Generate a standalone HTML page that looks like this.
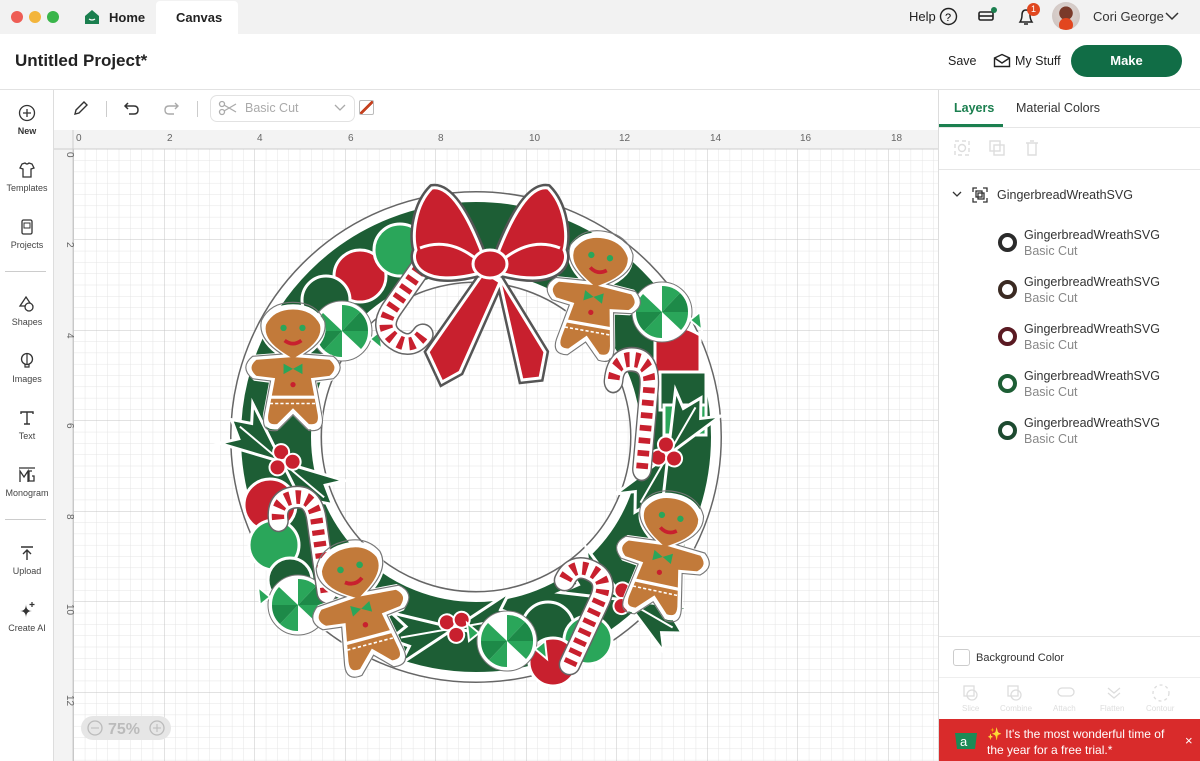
<!DOCTYPE html>
<html><head><meta charset="utf-8"><style>
*{margin:0;padding:0;box-sizing:border-box}
body{width:1200px;height:761px;overflow:hidden;background:#fff;font-family:"Liberation Sans",sans-serif;color:#222;position:relative}
.abs{position:absolute}
.top{left:0;top:0;width:1200px;height:34px;background:#f2f2f2}
.dot{width:12px;height:12px;border-radius:50%;top:11px}
.hdr{top:34px;left:0;width:1200px;height:56px;background:#fff;border-bottom:1px solid #e2e2e2}
.side{left:0;top:90px;width:54px;height:671px;background:#fff;border-right:1px solid #ddd}
.si{width:54px;text-align:center;font-size:9px;color:#444}
.si svg{display:block;margin:0 auto 4px}
.tb{left:54px;top:90px;width:884px;height:40px;background:#fff}
.rp{left:938px;top:90px;width:262px;height:671px;background:#fff;border-left:1px solid #ddd}
.lay{left:1024px;font-size:12.5px;color:#333;line-height:16px}
.lay span{color:#888}
.th{left:998px;width:19px;height:19px;border-radius:50%;border:4px solid #2b2b2b;background:#fff}
</style></head><body>
<div class="abs top"></div>
<div class="abs dot" style="left:11px;background:#ee5d55"></div>
<div class="abs dot" style="left:29px;background:#f3b53c"></div>
<div class="abs dot" style="left:47px;background:#39b54a"></div>
<svg class="abs" style="left:84px;top:9px" width="16" height="16" viewBox="0 0 16 16"><path d="M1 7 L8 1 L15 7 V15 H1Z" fill="#1b7f4f"/><path d="M5 10 Q8 12 11 10" stroke="#fff" stroke-width="1.3" fill="none"/></svg>
<div class="abs" style="left:109px;top:10px;font-size:13px;font-weight:bold;color:#222">Home</div>
<div class="abs" style="left:156px;top:1px;width:82px;height:33px;background:#fff;border-radius:4px 4px 0 0"></div>
<div class="abs" style="left:176px;top:10px;font-size:13px;font-weight:bold;color:#222">Canvas</div>
<div class="abs" style="left:909px;top:9px;font-size:13px">Help</div>
<svg class="abs" style="left:939px;top:7px" width="19" height="19"><circle cx="9.5" cy="9.5" r="8" stroke="#222" stroke-width="1.4" fill="none"/><text x="6" y="14" font-size="11" font-family="Liberation Sans">?</text></svg>
<svg class="abs" style="left:977px;top:7px" width="20" height="16"><rect x="2" y="5" width="14" height="8" rx="1.5" fill="none" stroke="#222" stroke-width="1.6"/><line x1="2" y1="9" x2="16" y2="9" stroke="#222" stroke-width="1.6"/><circle cx="17" cy="3" r="3" fill="#1b7f4f"/></svg>
<svg class="abs" style="left:1016px;top:7px" width="20" height="20"><path d="M4 15 Q6 12 6 8 Q6 3 10 3 Q14 3 14 8 Q14 12 16 15Z M8 17 H12" fill="none" stroke="#222" stroke-width="1.5"/></svg>
<div class="abs" style="left:1027px;top:3px;width:13px;height:13px;border-radius:50%;background:#e0471f;color:#fff;font-size:9px;text-align:center;line-height:13px">1</div>
<div class="abs" style="left:1052px;top:2px;width:28px;height:28px;border-radius:50%;background:radial-gradient(circle at 50% 40%,#7a3a2a 30%,#d9cfcb 32%,#c9c0bd);overflow:hidden"><div style="position:absolute;left:7px;top:16px;width:14px;height:14px;border-radius:50%;background:#e2461f"></div></div>
<div class="abs" style="left:1093px;top:9px;font-size:13px;color:#333">Cori George</div>
<svg class="abs" style="left:1165px;top:11px" width="14" height="10"><path d="M1 2 L7 8 L13 2" stroke="#333" stroke-width="1.5" fill="none"/></svg>

<div class="abs hdr"></div>
<div class="abs" style="left:15px;top:51px;font-size:17px;font-weight:bold;color:#222">Untitled Project*</div>
<div class="abs" style="left:948px;top:54px;font-size:12.5px">Save</div>
<svg class="abs" style="left:993px;top:53px" width="18" height="15"><path d="M1.5 5 L9 1.5 L16.5 5 V13.5 H1.5Z M1.5 5 L9 10 L16.5 5" fill="none" stroke="#222" stroke-width="1.4"/></svg>
<div class="abs" style="left:1015px;top:54px;font-size:12.5px">My Stuff</div>
<div class="abs" style="left:1071px;top:45px;width:111px;height:32px;border-radius:16px;background:#116d46;color:#fff;font-weight:bold;font-size:13px;text-align:center;line-height:32px">Make</div>

<div class="abs side"></div>
<div class="abs si" style="top:104px"><svg width="18" height="18"><circle cx="9" cy="9" r="7.5" fill="none" stroke="#333" stroke-width="1.3"/><path d="M9 5V13M5 9H13" stroke="#333" stroke-width="1.3"/></svg><b style="color:#333">New</b></div>
<div class="abs si" style="top:161px"><svg width="18" height="18"><path d="M4 3 L7 2 Q9 4 11 2 L14 3 L16 7 L13 8 V16 H5 V8 L2 7Z" fill="none" stroke="#333" stroke-width="1.3"/></svg>Templates</div>
<div class="abs si" style="top:218px"><svg width="18" height="18"><rect x="4" y="2" width="10" height="14" rx="1.5" fill="none" stroke="#333" stroke-width="1.3"/><rect x="6" y="5" width="6" height="5" fill="none" stroke="#333"/></svg>Projects</div>
<div class="abs" style="left:5px;top:271px;width:41px;height:1px;background:#ccc"></div>
<div class="abs si" style="top:295px"><svg width="18" height="18"><path d="M8 2 L14 11 H2Z" fill="none" stroke="#333" stroke-width="1.3"/><circle cx="11" cy="12" r="4" fill="#fff" stroke="#333" stroke-width="1.3"/></svg>Shapes</div>
<div class="abs si" style="top:352px"><svg width="18" height="18"><circle cx="9" cy="7" r="5.5" fill="none" stroke="#333" stroke-width="1.3"/><path d="M7 12 V15 H11 V12 M9 2 V12" fill="none" stroke="#333" stroke-width="1.2"/></svg>Images</div>
<div class="abs si" style="top:409px"><svg width="18" height="18"><path d="M3 5 V3 H15 V5 M9 3 V15 M6 15 H12" fill="none" stroke="#333" stroke-width="1.4"/></svg>Text</div>
<div class="abs si" style="top:466px"><svg width="20" height="18"><path d="M2 2 H18 M3 16 V5 L7 11 L11 5 V16 M15 5 H12 V15 H17 V10 H15" fill="none" stroke="#333" stroke-width="1.3"/></svg>Monogram</div>
<div class="abs" style="left:5px;top:519px;width:41px;height:1px;background:#ccc"></div>
<div class="abs si" style="top:544px"><svg width="18" height="18"><path d="M3 3 H15 M9 16 V6 M5 10 L9 6 L13 10" fill="none" stroke="#333" stroke-width="1.4"/></svg>Upload</div>
<div class="abs si" style="top:601px"><svg width="18" height="18"><path d="M8 3 Q8 10 2 10 Q8 10 8 17 Q8 10 14 10 Q8 10 8 3Z" fill="#333"/><path d="M14 1 V6 M11.5 3.5 H16.5" stroke="#333" stroke-width="1.2"/></svg>Create AI</div>

<div class="abs tb"></div>
<svg class="abs" style="left:72px;top:99px" width="18" height="18"><path d="M3 15 L4 11 L12 3 L15 6 L7 14Z" fill="none" stroke="#333" stroke-width="1.4"/></svg>
<div class="abs" style="left:106px;top:101px;width:1px;height:16px;background:#ccc"></div>
<svg class="abs" style="left:123px;top:100px" width="18" height="16"><path d="M5 3 L2 6 L5 9 M2 6 H11 Q15 6 15 10 Q15 14 11 14 H6" fill="none" stroke="#333" stroke-width="1.5"/></svg>
<svg class="abs" style="left:162px;top:100px" width="18" height="16"><path d="M13 3 L16 6 L13 9 M16 6 H7 Q3 6 3 10 Q3 14 7 14 H12" fill="none" stroke="#aaa" stroke-width="1.4"/></svg>
<div class="abs" style="left:197px;top:101px;width:1px;height:16px;background:#ccc"></div>
<div class="abs" style="left:210px;top:95px;width:145px;height:27px;border:1px solid #e2e2e2;border-radius:7px"></div>
<svg class="abs" style="left:218px;top:100px" width="20" height="16"><circle cx="4" cy="4" r="2.5" fill="none" stroke="#aaa" stroke-width="1.3"/><circle cx="4" cy="12" r="2.5" fill="none" stroke="#aaa" stroke-width="1.3"/><path d="M6 5 L18 12 M6 11 L18 4" stroke="#aaa" stroke-width="1.3"/></svg>
<div class="abs" style="left:245px;top:101px;font-size:12.5px;color:#aaa">Basic Cut</div>
<svg class="abs" style="left:334px;top:104px" width="12" height="8"><path d="M1 1 L6 6 L11 1" fill="none" stroke="#aaa" stroke-width="1.3"/></svg>
<div class="abs" style="left:359px;top:100px;width:15px;height:15px;border:1px solid #bbb;border-radius:2px;background:linear-gradient(135deg,transparent 44%,#c5411f 44%,#c5411f 58%,transparent 58%)"></div>

<svg class="abs" style="left:54px;top:130px" width="884" height="631">
<defs>
<pattern id="mn" x="19.5" y="19" width="11.3125" height="11.3125" patternUnits="userSpaceOnUse"><path d="M0 0 V11.3125 M0 0 H11.3125" stroke="#e4e4e4" stroke-width="1"/></pattern>
<pattern id="mj" x="19.5" y="19" width="90.5" height="90.5" patternUnits="userSpaceOnUse"><path d="M0 0 V90.5 M0 0 H90.5" stroke="#c4c4c4" stroke-width="1"/></pattern>
</defs>
<rect width="884" height="631" fill="#fff"/>
<rect x="19" y="19" width="865" height="612" fill="url(#mn)"/>
<rect x="19" y="19" width="865" height="612" fill="url(#mj)"/>
<rect width="884" height="19" fill="#f3f3f3"/><rect width="19" height="631" fill="#f3f3f3"/>
<line x1="0" y1="19" x2="884" y2="19" stroke="#ccc"/><line x1="19" y1="0" x2="19" y2="631" stroke="#ccc"/>
<g font-size="10" fill="#666" font-family="Liberation Sans">
<text x="22" y="11">0</text><text x="113" y="11">2</text><text x="203" y="11">4</text><text x="294" y="11">6</text><text x="384" y="11">8</text><text x="475" y="11">10</text><text x="565" y="11">12</text><text x="656" y="11">14</text><text x="746" y="11">16</text><text x="837" y="11">18</text>
<text transform="translate(13,22) rotate(90)">0</text><text transform="translate(13,112) rotate(90)">2</text><text transform="translate(13,203) rotate(90)">4</text><text transform="translate(13,293) rotate(90)">6</text><text transform="translate(13,384) rotate(90)">8</text><text transform="translate(13,474) rotate(90)">10</text><text transform="translate(13,565) rotate(90)">12</text>
</g>
<rect x="27" y="586" width="90" height="24" rx="12" fill="#e6e6e6"/>
<circle cx="41" cy="598" r="7" fill="none" stroke="#bbb" stroke-width="1.3"/><path d="M37 598H45" stroke="#bbb"/>
<text x="54" y="604" font-size="16" fill="#bbb" font-weight="bold" font-family="Liberation Sans">75%</text>
<circle cx="103" cy="598" r="7" fill="none" stroke="#bbb" stroke-width="1.3"/><path d="M99 598H107M103 594V602" stroke="#bbb"/>
</svg>

<!-- wreath -->
<svg class="abs" style="left:0;top:0" width="938" height="761">
<defs>
<g id="gb"><path d="M-10 -16 Q-32 -30 -28 -46 Q-20 -62 0 -62 Q20 -62 28 -46 Q32 -30 10 -16 L36 -14 Q48 -4 36 6 L20 8 L26 40 Q28 54 14 52 L0 38 L-14 52 Q-28 54 -26 40 L-20 8 L-36 6 Q-48 -4 -36 -14Z" fill="#c27a3a" stroke="#fff" stroke-width="5"/><path d="M-10 -16 Q-32 -30 -28 -46 Q-20 -62 0 -62 Q20 -62 28 -46 Q32 -30 10 -16 L36 -14 Q48 -4 36 6 L20 8 L26 40 Q28 54 14 52 L0 38 L-14 52 Q-28 54 -26 40 L-20 8 L-36 6 Q-48 -4 -36 -14Z" fill="none" stroke="#777" stroke-width="1" transform="scale(1.07)"/><circle cx="-9" cy="-42" r="3" fill="#2aa65a"/><circle cx="9" cy="-42" r="3" fill="#2aa65a"/><path d="M-8 -30 Q0 -24 8 -30" stroke="#c8202e" stroke-width="3.5" fill="none"/><path d="M-9 -8 L9 2 V-8 L-9 2Z" fill="#2aa65a"/><circle cx="0" cy="12" r="2.5" fill="#c8202e"/><path d="M-22 24 H22" stroke="#fff" stroke-width="3"/><path d="M-22 30 H22" stroke="#fff" stroke-width="1.5" stroke-dasharray="3 2"/></g>
<g id="pm"><circle r="30" fill="#fff" stroke="#777" stroke-width="1"/><g fill="#2aa65a"><path d="M0 0 L0 -26 A26 26 0 0 1 18 -19Z"/><path d="M0 0 L26 0 A26 26 0 0 1 19 18Z"/><path d="M0 0 L0 26 A26 26 0 0 1 -18 19Z"/><path d="M0 0 L-26 0 A26 26 0 0 1 -19 -18Z"/></g><g fill="#1d8a48"><path d="M0 0 L18 -19 A26 26 0 0 1 26 0Z"/><path d="M0 0 L-18 19 A26 26 0 0 1 -26 0Z"/></g><path d="M-28 -8 L-40 -18 L-38 0Z M28 8 L40 18 L38 0Z" fill="#2aa65a" stroke="#fff" stroke-width="2"/></g>
<g id="hl"><path d="M0 0 L-60 -26 L-48 -10 L-66 0 L-48 10 L-60 26Z M0 0 L60 -26 L48 -10 L66 0 L48 10 L60 26Z" fill="#1d5e35" stroke="#fff" stroke-width="3"/><path d="M-55 0 H55" stroke="#fff" stroke-width="2"/><circle cx="-7" cy="-7" r="8" fill="#c8202e" stroke="#fff" stroke-width="2"/><circle cx="8" cy="-7" r="8" fill="#c8202e" stroke="#fff" stroke-width="2"/><circle cx="0" cy="7" r="8" fill="#c8202e" stroke="#fff" stroke-width="2"/></g>
<g id="cc"><path d="M0 60 V-10 Q0 -34 -20 -34 Q-40 -34 -40 -14" fill="none" stroke="#666" stroke-width="22" stroke-linecap="round"/><path d="M0 60 V-10 Q0 -34 -20 -34 Q-40 -34 -40 -14" fill="none" stroke="#fff" stroke-width="19" stroke-linecap="round"/><path d="M0 60 V-10 Q0 -34 -20 -34 Q-40 -34 -40 -14" fill="none" stroke="#c8202e" stroke-width="13" stroke-dasharray="5 6"/></g>
</defs>
<circle cx="476" cy="437" r="200" fill="none" stroke="#666" stroke-width="92"/>
<circle cx="476" cy="437" r="200" fill="none" stroke="#fff" stroke-width="89"/>
<circle cx="476" cy="437" r="200" fill="none" stroke="#1d5e35" stroke-width="70"/>
<!-- gumdrops -->
<g stroke="#fff" stroke-width="3">
<circle cx="360" cy="276" r="26" fill="#c8202e"/><circle cx="400" cy="250" r="26" fill="#2aa65a"/><circle cx="326" cy="300" r="24" fill="#1d5e35"/>
<path d="M655 330 Q675 320 700 335 L700 375 L655 375Z" fill="#c8202e"/><rect x="660" y="372" width="46" height="38" fill="#1d5e35"/><rect x="664" y="405" width="42" height="30" fill="#2aa65a"/>
<circle cx="270" cy="505" r="26" fill="#c8202e"/><circle cx="274" cy="545" r="25" fill="#2aa65a"/><circle cx="290" cy="580" r="22" fill="#1d5e35"/>
<circle cx="548" cy="628" r="26" fill="#1d5e35"/><circle cx="588" cy="640" r="24" fill="#2aa65a"/><circle cx="553" cy="662" r="24" fill="#c8202e"/>
</g>
<use href="#hl" transform="translate(282,462) rotate(40)"/>
<use href="#hl" transform="translate(668,455) rotate(-60)"/>
<use href="#hl" transform="translate(455,628) rotate(-10)"/>
<use href="#hl" transform="translate(625,600) rotate(30)"/>
<use href="#pm" transform="translate(342,331)"/>
<use href="#pm" transform="translate(662,312)"/>
<use href="#pm" transform="translate(298,605)"/>
<use href="#pm" transform="translate(507,641)"/>
<use href="#cc" transform="translate(398,300) rotate(-145)"/>
<use href="#cc" transform="translate(648,400) rotate(5) scale(0.9,1.15)"/>
<use href="#cc" transform="translate(318,530) rotate(-8) scale(0.95,1.05)"/>
<use href="#cc" transform="translate(595,610) rotate(25)"/>
<use href="#gb" transform="translate(293,372) scale(1.05)"/>
<use href="#gb" transform="translate(593,300) rotate(10) scale(1.05)"/>
<use href="#gb" transform="translate(362,612) rotate(-15) scale(1.1)"/>
<use href="#gb" transform="translate(662,560) rotate(12) scale(1.05)"/>
<!-- bow -->
<g stroke="#fff" stroke-width="3" fill="#c8202e">
<path d="M484 272 L428 352 L442 382 L460 372 L500 282Z M496 272 L500 282 L522 380 L540 378 L545 352Z" stroke="#555" stroke-width="8"/>
<path d="M484 272 L428 352 L442 382 L460 372 L500 282Z M496 272 L500 282 L522 380 L540 378 L545 352Z"/>
<path d="M484 258 C468 215 450 185 432 188 C415 205 412 235 416 250 C410 262 420 290 484 272Z" stroke="#555" stroke-width="8"/>
<path d="M496 258 C512 215 530 185 548 188 C565 205 568 235 564 250 C570 262 560 290 496 272Z" stroke="#555" stroke-width="8"/>
<path d="M484 258 C468 215 450 185 432 188 C415 205 412 235 416 250 C410 262 420 290 484 272Z"/>
<path d="M496 258 C512 215 530 185 548 188 C565 205 568 235 564 250 C570 262 560 290 496 272Z"/>
<path d="M420 248 Q450 236 480 262 M560 248 Q530 236 500 262" fill="none"/>
<ellipse cx="490" cy="264" rx="17" ry="14"/>
</g>
</svg>

<div class="abs rp"></div>
<div class="abs" style="left:954px;top:101px;font-size:12.5px;font-weight:bold;color:#1b7f4f">Layers</div>
<div class="abs" style="left:939px;top:124px;width:64px;height:3px;background:#1b7f4f"></div>
<div class="abs" style="left:1016px;top:101px;font-size:12.5px;color:#333">Material Colors</div>
<div class="abs" style="left:939px;top:127px;width:261px;height:1px;background:#e6e6e6"></div>
<svg class="abs" style="left:953px;top:139px" width="90" height="18"><g fill="none" stroke="#ddd" stroke-width="1.4"><rect x="2" y="2" width="14" height="14" stroke-dasharray="4 3"/><circle cx="9" cy="9" r="3.5"/><rect x="37" y="2" width="10" height="10"/><rect x="41" y="6" width="10" height="10"/><path d="M73 4H85M75 4V16H83V4M77 2H81"/></g></svg>
<div class="abs" style="left:939px;top:169px;width:261px;height:1px;background:#e6e6e6"></div>
<svg class="abs" style="left:952px;top:191px" width="10" height="8"><path d="M1 1L5 5L9 1" fill="none" stroke="#333" stroke-width="1.3"/></svg>
<svg class="abs" style="left:972px;top:187px" width="16" height="16"><g fill="none" stroke="#333" stroke-width="1.3"><path d="M1 5V1H5M11 1H15V5M15 11V15H11M5 15H1V11"/><rect x="4" y="4" width="6" height="6"/><rect x="6" y="6" width="6" height="6"/></g></svg>
<div class="abs" style="left:997px;top:188px;font-size:12.5px;color:#333">GingerbreadWreathSVG</div>
<div class="abs th" style="top:233px"></div>
<div class="abs th" style="top:280px;border-color:#3a2a22"></div>
<div class="abs th" style="top:327px;border-color:#5a1a22"></div>
<div class="abs th" style="top:374px;border-color:#1d5e35"></div>
<div class="abs th" style="top:421px;border-color:#1d4a30"></div>
<div class="abs lay" style="top:227px">GingerbreadWreathSVG<br><span>Basic Cut</span></div>
<div class="abs lay" style="top:274px">GingerbreadWreathSVG<br><span>Basic Cut</span></div>
<div class="abs lay" style="top:321px">GingerbreadWreathSVG<br><span>Basic Cut</span></div>
<div class="abs lay" style="top:368px">GingerbreadWreathSVG<br><span>Basic Cut</span></div>
<div class="abs lay" style="top:415px">GingerbreadWreathSVG<br><span>Basic Cut</span></div>
<div class="abs" style="left:939px;top:636px;width:261px;height:1px;background:#e6e6e6"></div>
<div class="abs" style="left:953px;top:649px;width:17px;height:17px;border:1px solid #ccc;border-radius:3px"></div>
<div class="abs" style="left:976px;top:652px;font-size:11px;color:#333">Background Color</div>
<div class="abs" style="left:939px;top:677px;width:261px;height:1px;background:#eee"></div>
<div class="abs" style="left:950px;top:684px;width:240px;font-size:8px;color:#ddd">
<svg width="240" height="18"><g fill="none" stroke="#ddd" stroke-width="1.3"><rect x="14" y="2" width="10" height="10"/><circle cx="22" cy="11" r="5"/><rect x="58" y="2" width="10" height="10"/><circle cx="66" cy="11" r="5"/><rect x="108" y="4" width="16" height="8" rx="4"/><path d="M158 4L164 9L170 4M158 9L164 14L170 9"/><circle cx="211" cy="9" r="8" stroke-dasharray="3 3"/></g></svg>
<div style="position:relative;height:10px"><span style="position:absolute;left:12px">Slice</span><span style="position:absolute;left:50px">Combine</span><span style="position:absolute;left:103px">Attach</span><span style="position:absolute;left:150px">Flatten</span><span style="position:absolute;left:196px">Contour</span></div>
</div>
<div class="abs" style="left:939px;top:719px;width:261px;height:42px;background:#d92b2b"></div>
<svg class="abs" style="left:954px;top:731px" width="24" height="20"><path d="M1 2 H23 L21 18 H3Z" fill="#1b8a56"/><text x="6" y="15" font-size="13" fill="#fff" font-family="Liberation Sans">a</text></svg>
<div class="abs" style="left:987px;top:726px;font-size:12px;color:#fff;line-height:16px"><span style="color:#ffd54a">✨</span> It's the most wonderful time of<br>the year for a free trial.*</div>
<div class="abs" style="left:1185px;top:733px;font-size:13px;color:#fff">×</div>
</body></html>
